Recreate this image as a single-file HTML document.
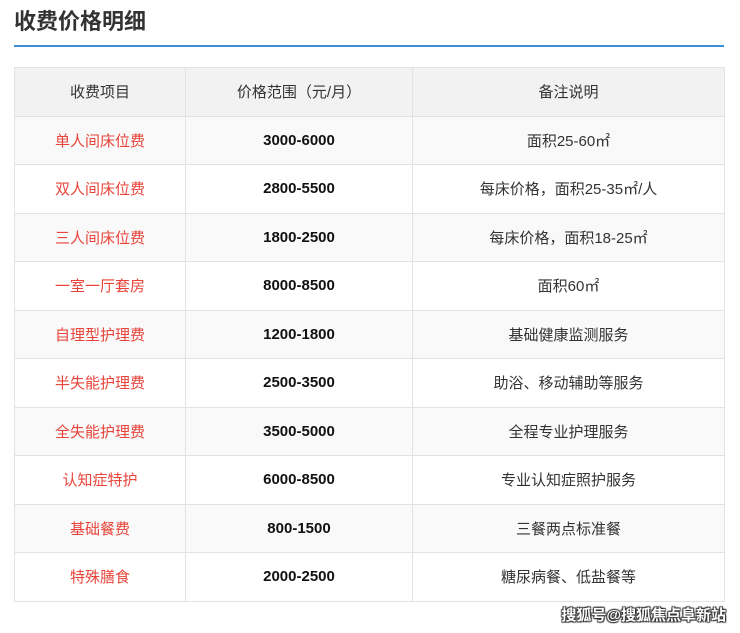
<!DOCTYPE html>
<html><head><meta charset="utf-8"><style>
body{margin:0;background:#fff;width:740px;height:633px;overflow:hidden;font-family:"Liberation Sans","Noto Sans CJK SC",sans-serif;}
h1{position:absolute;left:14px;top:4px;margin:0;font-size:22px;font-weight:bold;color:#333;}
.line{position:absolute;left:14px;top:45px;width:710px;height:2px;background:#3a8fd6;}
table{position:absolute;left:14px;top:67px;width:711px;border-collapse:collapse;font-size:15px;}
td,th{border:1px solid #e2e2e2;text-align:center;height:47.5px;padding:0;}
th{background:#f2f2f2;color:#333;font-weight:normal;}
tr:nth-child(even) td{background:#f9f9f9;}
td.a{color:#e8443a;width:170px;}
td.b{font-weight:bold;color:#111;width:226px;}
td.c{color:#333;}
.wm{position:absolute;right:14px;top:604px;font-size:15px;font-weight:bold;color:#fff;text-shadow:0 0 1px #333,1px 1px 1px #333,-1px -1px 1px #333,1px -1px 1px #333,-1px 1px 1px #333;}
</style></head><body>
<h1>收费价格明细</h1>
<div class="line"></div>
<table>
<tr><th>收费项目</th><th>价格范围（元/月）</th><th>备注说明</th></tr>
<tr><td class="a">单人间床位费</td><td class="b">3000-6000</td><td class="c">面积25-60㎡</td></tr>
<tr><td class="a">双人间床位费</td><td class="b">2800-5500</td><td class="c">每床价格，面积25-35㎡/人</td></tr>
<tr><td class="a">三人间床位费</td><td class="b">1800-2500</td><td class="c">每床价格，面积18-25㎡</td></tr>
<tr><td class="a">一室一厅套房</td><td class="b">8000-8500</td><td class="c">面积60㎡</td></tr>
<tr><td class="a">自理型护理费</td><td class="b">1200-1800</td><td class="c">基础健康监测服务</td></tr>
<tr><td class="a">半失能护理费</td><td class="b">2500-3500</td><td class="c">助浴、移动辅助等服务</td></tr>
<tr><td class="a">全失能护理费</td><td class="b">3500-5000</td><td class="c">全程专业护理服务</td></tr>
<tr><td class="a">认知症特护</td><td class="b">6000-8500</td><td class="c">专业认知症照护服务</td></tr>
<tr><td class="a">基础餐费</td><td class="b">800-1500</td><td class="c">三餐两点标准餐</td></tr>
<tr><td class="a">特殊膳食</td><td class="b">2000-2500</td><td class="c">糖尿病餐、低盐餐等</td></tr>
</table>
<div class="wm">搜狐号@搜狐焦点阜新站</div>
</body></html>
